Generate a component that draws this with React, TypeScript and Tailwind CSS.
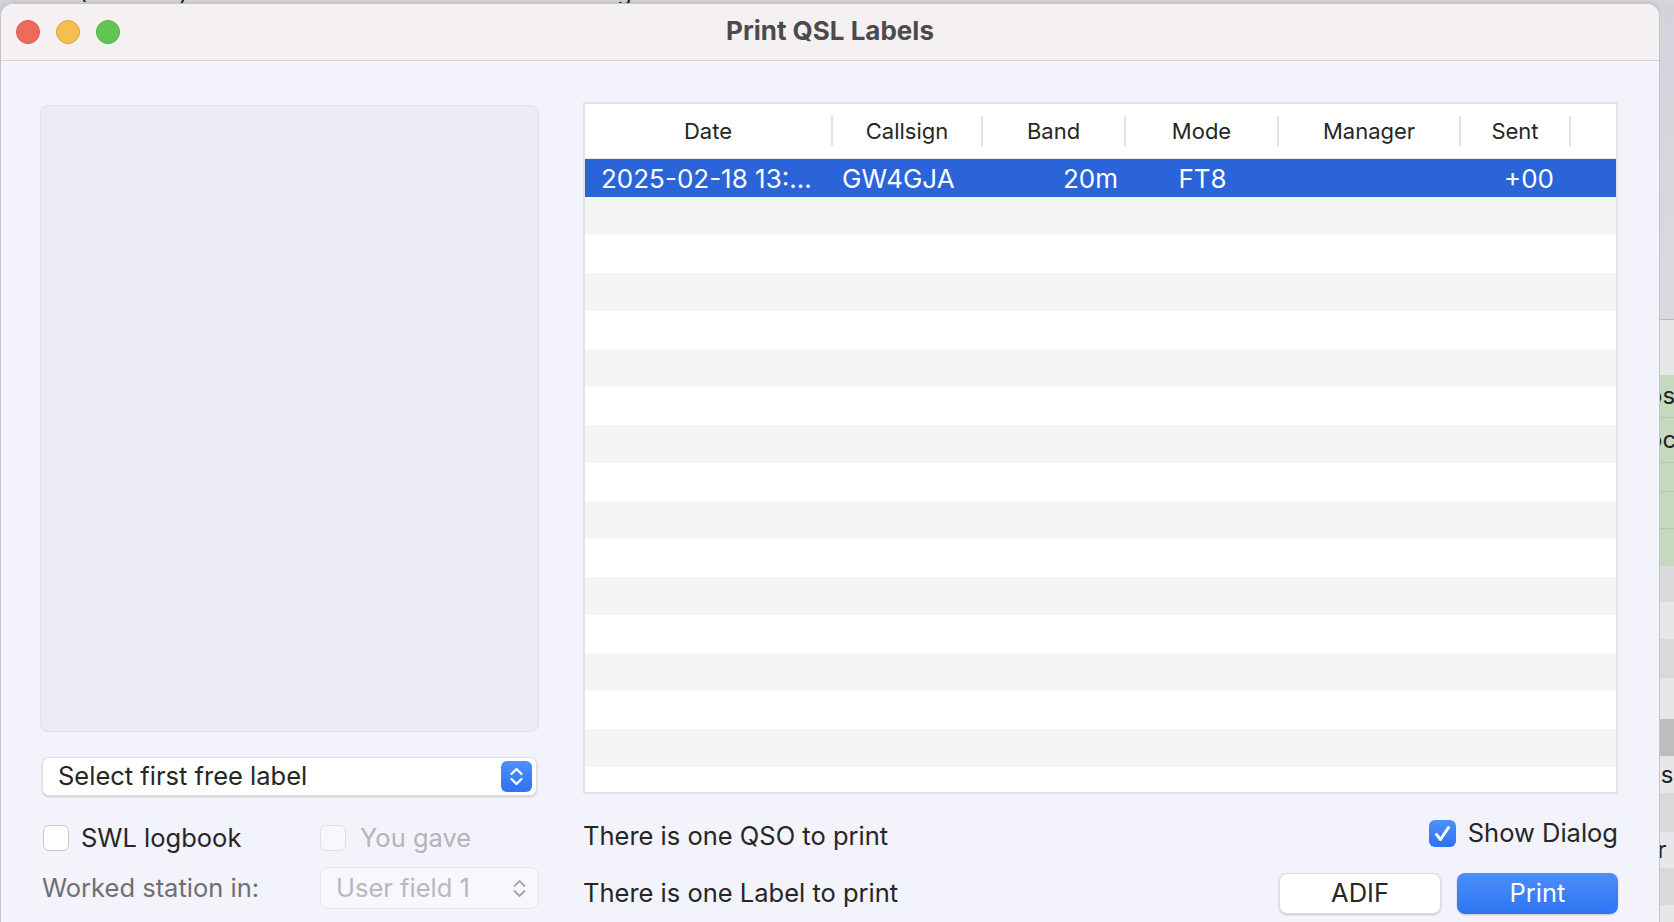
const cols = [
  { name: "Date", head: "w-[246px]", cell: "w-[248px] pl-[16px] text-left" },
  { name: "Callsign", head: "w-[148px]", cell: "w-[150px] pl-[9px] text-left" },
  { name: "Band", head: "w-[141px]", cell: "w-[143px] pr-[8px] text-right" },
  { name: "Mode", head: "w-[151px]", cell: "w-[153px] text-center" },
  { name: "Manager", head: "w-[180px]", cell: "w-[182px] text-center" },
  { name: "Sent", head: "w-[108px]", cell: "w-[110px] pr-[17px] text-right" },
];

const qso = ["2025-02-18 13:…", "GW4GJA", "20m", "FT8", "", "+00"];

const stripRows = [
  { h: "h-[55px]", bg: "bg-[#e7e7e9]", t: "" },
  { h: "h-[43px]", bg: "bg-[#c4d9be] border-b border-[#b4c8ae]", t: "os" },
  { h: "h-[45px]", bg: "bg-[#c4d9be] border-b border-[#b4c8ae]", t: "oc" },
  { h: "h-[29px]", bg: "bg-[#c4d9be] border-b border-[#b4c8ae]", t: "" },
  { h: "h-[37px]", bg: "bg-[#c4d9be] border-b border-[#b4c8ae]", t: "" },
  { h: "h-[37px]", bg: "bg-[#c4d9be]", t: "" },
  { h: "h-[36px]", bg: "bg-[#d9d9db]", t: "" },
  { h: "h-[37px]", bg: "bg-[#e7e7e9]", t: "" },
  { h: "h-[39px]", bg: "bg-[#d9d9db]", t: "" },
  { h: "h-[41px]", bg: "bg-[#e7e7e9]", t: "" },
  { h: "h-[37px]", bg: "bg-[#bdbdbf]", t: "" },
  { h: "h-[37px]", bg: "bg-[#e7e7e9]", t: "ss" },
  { h: "h-[39px]", bg: "bg-[#d9d9db]", t: "" },
  { h: "h-[36px]", bg: "bg-[#e7e7e9]", t: "rr" },
  { h: "h-[37px]", bg: "bg-[#d9d9db]", t: "" },
  { h: "flex-1", bg: "bg-[#e7e7e9]", t: "" },
];

function Stepper({ blue }: { blue?: boolean }) {
  const stroke = blue ? "#ffffff" : "#a5a5ab";
  return (
    <div
      className={
        blue
          ? "w-[31px] h-[31px] shrink-0 rounded-[6px] bg-gradient-to-b from-[#4d90f9] to-[#2d72f2] flex items-center justify-center"
          : "w-[31px] h-[31px] shrink-0 flex items-center justify-center"
      }
    >
      <svg width="31" height="31" viewBox="0 0 31 31" fill="none">
        <path d="M10.5 13 L15.5 8 L20.5 13" stroke={stroke} strokeWidth={blue ? 2.2 : 1.8} strokeLinecap="round" strokeLinejoin="round" />
        <path d="M10.5 18 L15.5 23 L20.5 18" stroke={stroke} strokeWidth={blue ? 2.2 : 1.8} strokeLinecap="round" strokeLinejoin="round" />
      </svg>
    </div>
  );
}

export default function App() {
  return (
    <div className="w-[1674px] h-[922px] overflow-hidden bg-[#d6d6dd] flex flex-col font-['Inter',sans-serif] text-[#262626]">
      {/* app behind the dialog, only a sliver shows */}
      <div className="h-[3px] overflow-hidden">
        <div className="-mt-[22px] flex text-[24px] leading-[28px] text-[#222]">
          <span className="-ml-[4px] w-[534px]">.1842= (Nautical)</span>
          <span>Club Log Info</span>
        </div>
      </div>

      <div className="flex flex-1 min-h-0">
        <div className="w-[1660px] flex flex-col bg-[#f3f3fc] rounded-t-[13px] border-x border-t border-[#c4c4cb] overflow-hidden shadow-[0_0_6px_rgba(0,0,0,0.15)]">
          {/* title bar */}
          <div className="h-[57px] shrink-0 grid grid-cols-[1fr_auto_1fr] items-center bg-[#f5f1f3] border-b border-[#d3d1d6]">
            <div className="flex gap-[16px] pl-[15px]">
              <div className="w-[24px] h-[24px] rounded-full bg-[#ed6a5e] border border-[#d8554a]" />
              <div className="w-[24px] h-[24px] rounded-full bg-[#f5bf4f] border border-[#dda53a]" />
              <div className="w-[24px] h-[24px] rounded-full bg-[#61c554] border border-[#4fae43]" />
            </div>
            <div className="-mt-[3px] text-[26px] font-bold text-[#4b4b4d]">Print QSL Labels</div>
            <div />
          </div>

          {/* content */}
          <div className="flex gap-[44px] pl-[39px] pt-[41px] text-[25.5px]">
            {/* left column */}
            <div className="w-[499px] flex flex-col pt-[3px]">
              <div className="h-[627px] rounded-[8px] bg-[#ebebf4] border border-[#e0e0e9]" />

              <div className="mt-[25px] mx-[2px] h-[39px] flex items-center justify-between pl-[15px] pr-[4px] bg-white rounded-[7px] border border-[#e0e0e4] shadow-[0_1px_2px_rgba(0,0,0,0.18)]">
                <span>Select first free label</span>
                <Stepper blue />
              </div>

              <div className="mt-[28px] h-[28px] flex items-center">
                <div className="w-[280px] flex items-center pl-[3px]">
                  <div className="w-[26px] h-[26px] rounded-[6px] border border-[#c8c8cc] bg-white" />
                  <span className="ml-[12px]">SWL logbook</span>
                </div>
                <div className="w-[26px] h-[26px] rounded-[6px] border border-[#e0e0e5] bg-[#f8f8fc]" />
                <span className="ml-[14px] text-[#b4b4ba]">You gave</span>
              </div>

              <div className="mt-[15px] h-[42px] flex items-center">
                <span className="w-[280px] pl-[2px] text-[#6e6e73]">Worked station in:</span>
                <div className="w-[219px] h-[42px] rounded-[8px] border border-[#e3e3ea] bg-[#f7f7fc] flex items-center justify-between pl-[15px] pr-[3px]">
                  <span className="text-[#b8b8be]">User field 1</span>
                  <Stepper />
                </div>
              </div>
            </div>

            {/* right column */}
            <div className="w-[1035px] flex flex-col">
              <div className="h-[692px] border-2 border-[#e4e4e7] bg-white overflow-hidden">
                <div className="h-[55px] flex items-center border-b border-[#e8e8ea]">
                  {cols.map((c) => (
                    <div key={c.name} className="flex items-center">
                      <div className={`${c.head} text-center text-[22px] text-[#262626]`}>{c.name}</div>
                      <div className="w-[2px] h-[30px] bg-[#e2e2e4]" />
                    </div>
                  ))}
                </div>
                {Array.from({ length: 17 }).map((_, i) => (
                  <div
                    key={i}
                    className={
                      i === 0
                        ? "h-[38px] flex items-center bg-[#2b63d9] text-white"
                        : i % 2 === 1
                        ? "h-[38px] bg-[#f4f5f5]"
                        : "h-[38px] bg-white"
                    }
                  >
                    {i === 0 &&
                      cols.map((c, j) => (
                        <div key={c.name} className={`${c.cell} text-[26px] whitespace-nowrap`}>
                          {qso[j]}
                        </div>
                      ))}
                  </div>
                ))}
              </div>

              <div className="mt-[22px] h-[40px] flex items-center justify-between">
                <span>There is one QSO to print</span>
                <div className="flex items-center -mt-[6px]">
                  <div className="w-[27px] h-[27px] rounded-[6px] bg-gradient-to-b from-[#4d90f9] to-[#2d72f2] flex items-center justify-center">
                    <svg width="27" height="27" viewBox="0 0 27 27" fill="none">
                      <path d="M7.5 14.5 L11.5 19.5 L19.5 7.5" stroke="#ffffff" strokeWidth="3" strokeLinecap="round" strokeLinejoin="round" />
                    </svg>
                  </div>
                  <span className="ml-[12px]">Show Dialog</span>
                </div>
              </div>

              <div className="mt-[17px] h-[41px] flex items-center justify-between">
                <span>There is one Label to print</span>
                <div className="flex gap-[16px]">
                  <button className="w-[162px] h-[41px] rounded-[8px] bg-white border border-[#dcdce0] shadow-[0_1px_2px_rgba(0,0,0,0.2)] text-[#262626]">
                    ADIF
                  </button>
                  <button className="w-[161px] h-[41px] rounded-[8px] bg-gradient-to-b from-[#4b8ff9] to-[#2f74f3] shadow-[0_1px_2px_rgba(0,0,0,0.2)] text-white">
                    Print
                  </button>
                </div>
              </div>
            </div>
          </div>
        </div>

        {/* app behind, right edge */}
        <div className="flex-1 flex flex-col overflow-hidden">
          <div className="h-[317px] bg-gradient-to-b from-[#d3d3db] to-[#d9d9df] border-b border-[#b9b9bd]" />
          {stripRows.map((r, i) => (
            <div key={i} className={`${r.h} ${r.bg} flex items-center overflow-hidden`}>
              {r.t && <span className="-ml-[12px] text-[24px] leading-none text-[#222]">{r.t}</span>}
            </div>
          ))}
        </div>
      </div>
    </div>
  );
}
